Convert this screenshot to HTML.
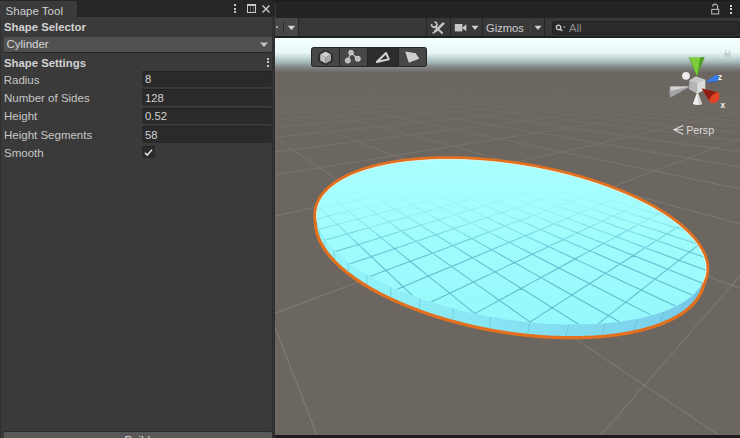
<!DOCTYPE html>
<html><head><meta charset="utf-8">
<style>
*{margin:0;padding:0;box-sizing:border-box}
html,body{width:740px;height:438px;overflow:hidden;background:#1b1b1b;font-family:"Liberation Sans",sans-serif;color:#c8c8c8}
.a{position:absolute}
#lhead{left:0;top:0;width:276px;height:17px;background:#262626;border-top-right-radius:4px}
#tab{left:0;top:1px;width:77px;height:17px;background:#3a3a3a;border-top-right-radius:2px}
#tabtxt{left:5.6px;top:4.8px;font-size:11.5px;color:#d0d0d0;white-space:pre}
#lpanel{left:0;top:17px;width:272px;height:421px;background:#3a3a3a}
#lborder{left:272px;top:17px;width:3px;height:421px;background:#303030}
.t{position:absolute;font-size:11.5px;color:#c6c6c6;white-space:pre;line-height:13px}
.b{font-weight:bold;color:#d2d2d2;font-size:11.35px}
.fld{position:absolute;left:142px;width:130px;height:16.6px;background:#2a2a2a;border-top:1px solid #202020;border-radius:2px}
.fv{position:absolute;left:145px;font-size:11.3px;color:#d2d2d2;white-space:pre;line-height:13px}
#rtop{left:276px;top:0;width:464px;height:17.5px;background:#232323;border-top:1px solid #1a1a1a}
#tbar{left:275px;top:17.5px;width:465px;height:20px;background:#383838}
#scene{left:275px;top:37.5px;width:465px;height:397px;overflow:hidden}
</style></head><body>
<div class="a" id="lhead"></div>
<div class="a" id="tab"></div>
<div class="a" id="tabtxt">Shape Tool</div>
<div class="a" id="lpanel"></div>
<div class="a" id="lborder"></div>
<div class="a" style="left:0;top:17px;width:1px;height:421px;background:#303030"></div>
<div class="a" id="rtop"></div>
<div class="a" id="tbar"></div>

<div class="t b" style="left:4px;top:21px">Shape Selector</div>
<div class="a" style="left:4px;top:37px;width:268px;height:15.5px;background:#515151;border-bottom:1.5px solid #262626;border-radius:2px"></div>
<div class="t" style="left:6.5px;top:38px;color:#d8d8d8">Cylinder</div>
<div class="t b" style="left:4px;top:57px">Shape Settings</div>

<div class="t" style="left:3.7px;top:73.7px">Radius</div>
<div class="t" style="left:4px;top:91.5px">Number of Sides</div>
<div class="t" style="left:4px;top:110px">Height</div>
<div class="t" style="left:4px;top:128.5px">Height Segments</div>
<div class="t" style="left:4px;top:147px">Smooth</div>

<div class="fld" style="top:70.6px"></div>
<div class="fld" style="top:89.1px"></div>
<div class="fld" style="top:107.6px"></div>
<div class="fld" style="top:126.1px"></div>
<div class="fv" style="top:73px">8</div>
<div class="fv" style="top:91.5px">128</div>
<div class="fv" style="top:110px">0.52</div>
<div class="fv" style="top:128.5px">58</div>
<div class="a" style="left:142px;top:145.6px;width:13px;height:12.8px;background:#2a2a2a;border-top:1px solid #212121;border-radius:2px"></div>

<div class="a" style="left:4px;top:431px;width:268px;height:8px;background:#585858;border-top:1px solid #2a2a2a;border-radius:2px 2px 0 0;overflow:hidden"><div style="position:absolute;left:120.5px;top:2.3px;font-size:11.5px;line-height:13px;color:#e0e0e0">Build</div></div>
<div class="a" style="left:275px;top:433.8px;width:465px;height:1px;background:#78736c"></div>


<!-- header icons -->
<div class="a" style="left:234px;top:4px;width:2px;height:2px;background:#c8c8c8"></div>
<div class="a" style="left:234px;top:7.5px;width:2px;height:2px;background:#c8c8c8"></div>
<div class="a" style="left:234px;top:11px;width:2px;height:2px;background:#c8c8c8"></div>
<div class="a" style="left:247px;top:4px;width:9px;height:8.5px;border:1px solid #c8c8c8;border-top-width:2px"></div><div class="a" style="left:250px;top:7px;width:1px;height:4.5px;background:#5a5a5a"></div><div class="a" style="left:252.5px;top:7px;width:1px;height:4.5px;background:#5a5a5a"></div>
<svg class="a" style="left:261px;top:3.5px" width="10" height="10" viewBox="0 0 10 10"><path d="M1.5,1.5L8.5,8.5M8.5,1.5L1.5,8.5" stroke="#d0d0d0" stroke-width="1.3"/></svg>
<!-- dropdown arrow -->
<svg class="a" style="left:259px;top:41px" width="10" height="7" viewBox="0 0 10 7"><path d="M1,1.5L9,1.5L5,6Z" fill="#c4c4c4"/></svg>
<!-- settings kebab -->
<div class="a" style="left:267px;top:57.5px;width:2px;height:2px;background:#c4c4c4"></div>
<div class="a" style="left:267px;top:61px;width:2px;height:2px;background:#c4c4c4"></div>
<div class="a" style="left:267px;top:64.5px;width:2px;height:2px;background:#c4c4c4"></div>
<!-- checkmark -->
<svg class="a" style="left:142px;top:145.7px" width="13" height="13" viewBox="0 0 13 13"><path d="M3,6.8L5.3,9L10,3.8" stroke="#e0e0e0" stroke-width="1.6" fill="none"/></svg>

<!-- scene toolbar -->
<div class="a" style="left:275px;top:17.5px;width:23px;height:19px;background:#474747"></div>
<div class="a" style="left:276px;top:26px;width:2px;height:2px;background:#a0a0a0"></div>
<div class="a" style="left:283px;top:22px;width:1px;height:11px;background:#2c2c2c"></div>
<svg class="a" style="left:287px;top:24.5px" width="9" height="6" viewBox="0 0 9 6"><path d="M0.8,0.8L8.2,0.8L4.5,5.2Z" fill="#d0d0d0"/></svg>
<div class="a" style="left:298px;top:17.5px;width:1px;height:19px;background:#262626"></div>
<div class="a" style="left:426px;top:17.5px;width:1px;height:19px;background:#262626"></div>
<div class="a" style="left:450px;top:17.5px;width:1px;height:19px;background:#262626"></div>
<div class="a" style="left:482px;top:17.5px;width:1px;height:19px;background:#262626"></div>
<div class="a" style="left:530px;top:20px;width:1px;height:14px;background:#444"></div>
<div class="a" style="left:544px;top:17.5px;width:1px;height:19px;background:#262626"></div>
<div class="a" style="left:275px;top:36px;width:465px;height:1.5px;background:#1e1e1e"></div>
<svg class="a" style="left:430px;top:20.5px" width="15" height="15" viewBox="0 0 15 15">
<path d="M4.6,5L12.6,12.4" stroke="#c4c4c4" stroke-width="2"/>
<path d="M1.6,3.2A2.7,2.7 0 1 0 4.6,0.9" stroke="#c4c4c4" stroke-width="1.7" fill="none"/>
<path d="M13.2,2.6L5.6,10" stroke="#c4c4c4" stroke-width="2.6" stroke-linecap="round"/>
<path d="M5.8,9.8L2.6,12.4" stroke="#c4c4c4" stroke-width="1.5"/>
</svg>
<svg class="a" style="left:454px;top:23px" width="14" height="10" viewBox="0 0 14 10">
<rect x="0.8" y="1" width="7.6" height="7.4" fill="#c8c8c8"/>
<path d="M8.6,4.2L12.4,1.2L12.4,8.2L8.6,5.4Z" fill="#c8c8c8"/>
</svg>
<svg class="a" style="left:471px;top:25px" width="8" height="6" viewBox="0 0 8 6"><path d="M0.5,0.8L7.5,0.8L4,5Z" fill="#d0d0d0"/></svg>
<div class="a" style="left:486px;top:21.5px;font-size:11.2px;color:#cfcfcf;line-height:13px;white-space:pre">Gizmos</div>
<svg class="a" style="left:533.5px;top:25px" width="8" height="6" viewBox="0 0 8 6"><path d="M0.5,0.8L7.5,0.8L4,5Z" fill="#d0d0d0"/></svg>
<div class="a" style="left:552px;top:20.5px;width:187.5px;height:14px;background:#2a2a2a;border:1px solid #212121;border-radius:3px"></div>
<svg class="a" style="left:555px;top:24px" width="12" height="8" viewBox="0 0 12 8">
<circle cx="3.6" cy="3.4" r="2.2" stroke="#d0d0d0" stroke-width="1.3" fill="none"/>
<path d="M5.2,5L7.2,7" stroke="#d0d0d0" stroke-width="1.4"/>
<path d="M8,2.5L10.4,2.5L9.2,4Z" fill="#c0c0c0"/>
</svg>
<div class="a" style="left:569px;top:21.5px;font-size:11.2px;color:#8e8e8e;line-height:13px;white-space:pre">All</div>
<!-- top right lock / kebab -->
<svg class="a" style="left:709px;top:3px" width="12" height="12" viewBox="0 0 12 12">
<path d="M3.6,3.6A2.5,2.5 0 0 1 8.6,3.6L8.6,6.5" stroke="#b4b4b4" stroke-width="1.2" fill="none"/>
<rect x="2.7" y="6.4" width="7" height="4.5" stroke="#b4b4b4" stroke-width="1.1" fill="none"/>
</svg>
<div class="a" style="left:730px;top:4.7px;width:2px;height:2px;background:#d0d0d0"></div>
<div class="a" style="left:730px;top:8.2px;width:2px;height:2px;background:#d0d0d0"></div>
<div class="a" style="left:730px;top:11.7px;width:2px;height:2px;background:#d0d0d0"></div>
<!-- left panel border top -->
<div class="a" style="left:274.5px;top:3px;width:1px;height:15px;background:#3a3a3a"></div>
<div class="a" id="scene">
<svg width="465" height="397" viewBox="275 37.5 465 397">
<defs>
<linearGradient id="sky" x1="0" y1="37.5" x2="0" y2="72" gradientUnits="userSpaceOnUse">
<stop offset="0" stop-color="#f6ffff"/>
<stop offset="0.42" stop-color="#e8f8f6"/>
<stop offset="0.559" stop-color="#c8dcdc"/>
<stop offset="0.699" stop-color="#a8b8b8"/>
<stop offset="0.797" stop-color="#8c9696"/>
<stop offset="0.899" stop-color="#7a7a78"/>
<stop offset="1" stop-color="#6e6866"/>
</linearGradient>
<linearGradient id="gfade" x1="0" y1="72" x2="0" y2="435" gradientUnits="userSpaceOnUse">
<stop offset="0" stop-color="#fff" stop-opacity="0"/>
<stop offset="0.05" stop-color="#fff" stop-opacity="0.03"/>
<stop offset="0.105" stop-color="#fff" stop-opacity="0.18"/>
<stop offset="0.215" stop-color="#fff" stop-opacity="0.55"/>
<stop offset="0.49" stop-color="#fff" stop-opacity="0.9"/>
<stop offset="1" stop-color="#fff" stop-opacity="1"/>
</linearGradient>
<mask id="gm"><rect x="275" y="71" width="465" height="364" fill="url(#gfade)"/></mask>
<linearGradient id="bandgrad" x1="320" y1="0" x2="712" y2="0" gradientUnits="userSpaceOnUse">
<stop offset="0" stop-color="#94f6fa"/>
<stop offset="0.25" stop-color="#8eecf6"/>
<stop offset="0.55" stop-color="#84e0f2"/>
<stop offset="0.85" stop-color="#7cd2ec"/>
<stop offset="1" stop-color="#74c4e8"/>
</linearGradient>
<linearGradient id="facegrad" x1="0" y1="156" x2="0" y2="330" gradientUnits="userSpaceOnUse">
<stop offset="0" stop-color="#aafefe"/>
<stop offset="0.5" stop-color="#a0fcfc"/>
<stop offset="1" stop-color="#94f8fc"/>
</linearGradient>
<linearGradient id="ffade" x1="0" y1="160" x2="0" y2="330" gradientUnits="userSpaceOnUse">
<stop offset="0" stop-color="#fff" stop-opacity="0"/>
<stop offset="0.15" stop-color="#fff" stop-opacity="0.12"/>
<stop offset="0.35" stop-color="#fff" stop-opacity="0.55"/>
<stop offset="0.6" stop-color="#fff" stop-opacity="0.9"/>
<stop offset="1" stop-color="#fff" stop-opacity="1"/>
</linearGradient>
<mask id="fm"><rect x="275" y="150" width="465" height="200" fill="url(#ffade)"/></mask>
<filter id="soft" x="-5%" y="-5%" width="110%" height="110%"><feGaussianBlur stdDeviation="0.4"/></filter>
<clipPath id="outbot"><path clip-rule="evenodd" d="M275,37L740,37L740,435L275,435ZM640.0,208.3L636.9,206.7L633.9,205.1L630.7,203.6L627.6,202.1L624.5,200.6L621.3,199.2L618.2,197.8L615.0,196.5L611.8,195.2L608.6,193.9L605.4,192.7L602.2,191.5L599.0,190.3L595.8,189.1L592.7,188.0L589.5,186.9L586.3,185.9L583.1,184.9L579.9,183.9L576.7,182.9L573.6,182.0L570.4,181.1L567.3,180.2L564.1,179.3L561.0,178.5L557.9,177.7L554.7,176.9L551.6,176.2L548.5,175.5L545.5,174.8L542.4,174.1L539.3,173.5L536.3,172.8L533.2,172.2L530.2,171.6L527.2,171.1L524.2,170.6L521.2,170.0L518.2,169.6L515.2,169.1L512.3,168.6L509.4,168.2L506.4,167.8L503.5,167.4L500.6,167.0L497.7,166.7L494.8,166.4L492.0,166.1L489.1,165.8L486.3,165.5L483.5,165.3L480.6,165.0L477.9,164.8L475.1,164.6L472.3,164.5L469.5,164.3L466.8,164.2L464.0,164.0L461.3,163.9L458.6,163.9L455.9,163.8L453.2,163.8L450.6,163.7L447.9,163.7L445.3,163.7L442.6,163.8L440.0,163.8L437.4,163.9L434.8,163.9L432.2,164.0L429.7,164.2L427.1,164.3L424.6,164.5L422.1,164.6L419.6,164.8L417.1,165.0L414.6,165.3L412.1,165.5L409.7,165.8L407.2,166.1L404.8,166.4L402.4,166.7L400.0,167.0L397.6,167.4L395.3,167.8L392.9,168.2L390.6,168.6L388.3,169.1L386.0,169.6L383.7,170.0L381.5,170.6L379.3,171.1L377.0,171.6L374.9,172.2L372.7,172.8L370.5,173.5L368.4,174.1L366.3,174.8L364.2,175.5L362.2,176.2L360.1,176.9L358.1,177.7L356.2,178.5L354.2,179.3L352.3,180.2L350.4,181.1L348.6,182.0L346.7,182.9L345.0,183.9L343.2,184.9L341.5,185.9L339.8,186.9L338.2,188.0L336.6,189.1L335.1,190.3L333.6,191.5L332.1,192.7L330.7,193.9L329.4,195.2L328.1,196.5L326.8,197.8L325.7,199.2L324.6,200.6L323.5,202.1L322.5,203.6L321.6,205.1L320.8,206.7L320.0,208.3L319.3,209.9L318.7,211.6L318.2,213.3L317.8,215.1L317.4,216.9L317.2,218.7L317.1,220.6L317.0,222.5L317.1,224.4L317.3,226.4L317.6,228.5L318.1,230.5L318.6,232.7L319.3,234.8L320.1,237.0L321.1,239.2L322.2,241.5L323.5,243.8L324.9,246.2L326.4,248.5L328.2,250.9L330.1,253.4L332.2,255.8L334.4,258.3L336.9,260.9L339.5,263.4L342.3,266.0L345.3,268.6L348.6,271.2L352.0,273.8L355.6,276.4L359.4,279.1L363.5,281.7L367.7,284.3L372.2,287.0L376.9,289.6L381.7,292.2L386.9,294.7L392.2,297.3L397.7,299.8L403.4,302.3L409.4,304.8L415.5,307.1L421.8,309.5L428.3,311.8L435.0,314.0L441.8,316.1L448.9,318.2L456.0,320.1L463.3,322.0L470.7,323.8L478.3,325.5L485.9,327.0L493.6,328.5L501.4,329.8L509.3,331.0L517.1,332.1L525.0,333.0L532.9,333.8L540.8,334.5L548.6,335.0L556.4,335.3L564.2,335.6L571.8,335.6L579.3,335.6L586.7,335.3L594.0,335.0L601.1,334.5L608.0,333.8L614.7,333.0L621.3,332.1L627.6,331.0L633.7,329.8L639.6,328.5L645.2,327.0L650.6,325.5L655.7,323.8L660.6,322.0L665.2,320.1L669.5,318.2L673.6,316.1L677.4,314.0L680.9,311.8L684.1,309.5L687.0,307.1L689.7,304.8L692.1,302.3L694.3,299.8L696.2,297.3L697.8,294.7L699.2,292.2L700.3,289.6L701.2,287.0L701.9,284.3L702.4,281.7L702.6,279.1L702.6,276.4L702.5,273.8L702.1,271.2L701.6,268.6L700.9,266.0L700.0,263.4L698.9,260.9L697.7,258.3L696.4,255.8L694.9,253.4L693.3,250.9L691.6,248.5L689.7,246.2L687.8,243.8L685.7,241.5L683.6,239.2L681.3,237.0L679.0,234.8L676.6,232.7L674.1,230.5L671.5,228.5L668.9,226.4L666.2,224.4L663.5,222.5L660.7,220.6L657.8,218.7L655.0,216.9L652.0,215.1L649.1,213.3L646.1,211.6L643.1,209.9Z"/></clipPath>
<clipPath id="topclip"><path d="M641.8,201.4L638.7,199.9L635.6,198.4L632.4,196.9L629.2,195.5L626.1,194.1L622.9,192.8L619.7,191.5L616.5,190.2L613.2,188.9L610.0,187.7L606.8,186.5L603.6,185.4L600.3,184.2L597.1,183.1L593.9,182.1L590.7,181.1L587.5,180.0L584.2,179.1L581.0,178.1L577.8,177.2L574.6,176.3L571.5,175.4L568.3,174.6L565.1,173.8L562.0,173.0L558.8,172.2L555.7,171.5L552.5,170.8L549.4,170.1L546.3,169.4L543.2,168.8L540.1,168.2L537.1,167.6L534.0,167.0L531.0,166.5L527.9,165.9L524.9,165.4L521.9,164.9L518.9,164.5L515.9,164.0L512.9,163.6L510.0,163.2L507.0,162.8L504.1,162.4L501.2,162.1L498.3,161.7L495.4,161.4L492.5,161.1L489.6,160.9L486.8,160.6L483.9,160.4L481.1,160.2L478.3,160.0L475.5,159.8L472.7,159.6L469.9,159.5L467.2,159.3L464.4,159.2L461.7,159.1L459.0,159.0L456.3,159.0L453.6,158.9L450.9,158.9L448.2,158.9L445.6,158.9L442.9,158.9L440.3,159.0L437.7,159.0L435.1,159.1L432.5,159.2L429.9,159.3L427.3,159.5L424.8,159.6L422.3,159.8L419.7,160.0L417.2,160.2L414.7,160.4L412.3,160.6L409.8,160.9L407.4,161.1L404.9,161.4L402.5,161.7L400.1,162.1L397.7,162.4L395.3,162.8L393.0,163.2L390.7,163.6L388.3,164.0L386.0,164.5L383.8,164.9L381.5,165.4L379.2,165.9L377.0,166.5L374.8,167.0L372.6,167.6L370.5,168.2L368.3,168.8L366.2,169.4L364.1,170.1L362.1,170.8L360.0,171.5L358.0,172.2L356.0,173.0L354.1,173.8L352.1,174.6L350.2,175.4L348.4,176.3L346.5,177.2L344.8,178.1L343.0,179.1L341.3,180.0L339.6,181.1L337.9,182.1L336.3,183.1L334.8,184.2L333.3,185.4L331.8,186.5L330.4,187.7L329.0,188.9L327.7,190.2L326.5,191.5L325.3,192.8L324.2,194.1L323.1,195.5L322.1,196.9L321.2,198.4L320.4,199.9L319.6,201.4L318.9,203.0L318.3,204.6L317.8,206.3L317.3,207.9L317.0,209.7L316.7,211.4L316.6,213.2L316.6,215.0L316.6,216.9L316.8,218.8L317.1,220.8L317.5,222.8L318.1,224.8L318.8,226.9L319.6,229.0L320.6,231.1L321.7,233.3L323.0,235.5L324.4,237.7L326.0,240.0L327.7,242.3L329.6,244.7L331.7,247.1L334.0,249.5L336.5,251.9L339.1,254.3L341.9,256.8L345.0,259.3L348.2,261.8L351.7,264.3L355.3,266.9L359.2,269.4L363.3,271.9L367.6,274.5L372.1,277.0L376.8,279.5L381.8,282.0L386.9,284.5L392.3,287.0L397.9,289.4L403.7,291.8L409.7,294.2L415.9,296.5L422.3,298.8L428.9,301.0L435.6,303.1L442.6,305.2L449.7,307.1L457.0,309.0L464.4,310.9L471.9,312.6L479.5,314.2L487.3,315.7L495.1,317.1L503.0,318.4L510.9,319.6L518.9,320.6L526.9,321.5L534.9,322.3L542.9,322.9L550.9,323.4L558.8,323.8L566.6,324.0L574.3,324.1L581.9,324.0L589.4,323.8L596.8,323.4L604.0,322.9L611.0,322.3L617.8,321.5L624.4,320.6L630.8,319.6L637.0,318.4L643.0,317.1L648.6,315.7L654.1,314.2L659.2,312.6L664.1,310.9L668.8,309.0L673.1,307.1L677.2,305.2L681.0,303.1L684.5,301.0L687.7,298.8L690.7,296.5L693.3,294.2L695.7,291.8L697.9,289.4L699.8,287.0L701.4,284.5L702.7,282.0L703.8,279.5L704.7,277.0L705.4,274.5L705.8,271.9L706.0,269.4L706.0,266.9L705.8,264.3L705.4,261.8L704.8,259.3L704.0,256.8L703.1,254.3L702.0,251.9L700.7,249.5L699.3,247.1L697.8,244.7L696.1,242.3L694.4,240.0L692.5,237.7L690.4,235.5L688.3,233.3L686.1,231.1L683.8,229.0L681.4,226.9L679.0,224.8L676.4,222.8L673.8,220.8L671.1,218.8L668.4,216.9L665.6,215.0L662.8,213.2L659.9,211.4L657.0,209.7L654.0,207.9L651.0,206.3L648.0,204.6L644.9,203.0Z"/></clipPath>
</defs>
<rect x="275" y="37.5" width="465" height="35" fill="url(#sky)"/>
<rect x="275" y="72" width="465" height="363" fill="#6c6660"/>
<g mask="url(#gm)"><path d="M-650.2,116.2L469.5,84.1M-750.6,121.7L478.9,84.5M-878.9,128.7L488.9,85.0M-1048.3,137.9L499.6,85.4M-1282.6,150.6L511.1,85.9M-1627.7,169.4L523.4,86.5M-2186.9,199.8L536.7,87.1M-3248.6,257.6L551.0,87.7M-6043.0,409.7L566.4,88.4M-33620.8,1910.7L583.2,89.1M-36028.3,2246.2L601.6,89.9M-32134.4,2246.2L621.6,90.8M-28240.5,2246.2L643.6,91.7M-24346.5,2246.2L668.0,92.8M-20452.6,2246.2L695.0,94.0M-16558.7,2246.2L725.1,95.3M-12664.7,2246.2L758.9,96.8M-8770.8,2246.2L797.2,98.5M-4876.9,2246.2L840.9,100.4M-983.0,2246.2L891.1,102.6M2911.0,2246.2L949.6,105.2M6804.9,2246.2L1018.5,108.2M10698.8,2246.2L1100.9,111.8M14592.8,2246.2L1201.1,116.2M18486.7,2246.2L1325.6,121.6M22380.6,2246.2L1484.6,128.6M26274.6,2246.2L1694.7,137.8M30168.5,2246.2L1985.1,150.6M34062.4,2246.2L2412.7,169.3M37956.3,2246.2L3105.2,199.7M41850.3,2246.2L4418.6,257.2M45744.2,2246.2L7867.1,408.4M49638.1,2246.2L41265.6,1872.5M-494.5,109.9L-37498.8,2246.2M-417.4,107.8L-35091.3,2246.2M-348.3,105.9L-32683.9,2246.2M-286.0,104.2L-30276.5,2246.2M-229.6,102.7L-27869.0,2246.2M-178.2,101.3L-25461.6,2246.2M-131.2,100.0L-23054.2,2246.2M-88.0,98.8L-20646.7,2246.2M-48.3,97.7L-18239.3,2246.2M-11.6,96.7L-15831.9,2246.2M22.4,95.8L-13424.4,2246.2M54.1,94.9L-11017.0,2246.2M83.5,94.1L-8609.5,2246.2M111.1,93.4L-6202.1,2246.2M136.8,92.7L-3794.7,2246.2M161.0,92.0L-1387.2,2246.2M183.7,91.4L1020.2,2246.2M205.1,90.8L3427.6,2246.2M225.3,90.2L5835.1,2246.2M244.4,89.7L8242.5,2246.2M262.5,89.2L10649.9,2246.2M279.6,88.7L13057.4,2246.2M295.8,88.3L15464.8,2246.2M311.3,87.9L17872.3,2246.2M325.9,87.5L20279.7,2246.2M339.9,87.1L22687.1,2246.2M353.3,86.7L25094.6,2246.2M366.0,86.4L27502.0,2246.2M378.2,86.0L29909.4,2246.2M389.9,85.7L32316.9,2246.2M401.1,85.4L34724.3,2246.2M411.8,85.1L37131.7,2246.2M422.0,84.8L39539.2,2246.2M431.9,84.6L41946.6,2246.2M441.4,84.3L44354.0,2246.2M450.5,84.1L46761.5,2246.2M459.3,83.8L49168.9,2246.2" stroke="#8a8580" stroke-width="0.8" fill="none"/></g>
<path d="M641.8,201.4L638.7,199.9L635.6,198.4L632.4,196.9L629.2,195.5L626.1,194.1L622.9,192.8L619.7,191.5L616.5,190.2L613.2,188.9L610.0,187.7L606.8,186.5L603.6,185.4L600.3,184.2L597.1,183.1L593.9,182.1L590.7,181.1L587.5,180.0L584.2,179.1L581.0,178.1L577.8,177.2L574.6,176.3L571.5,175.4L568.3,174.6L565.1,173.8L562.0,173.0L558.8,172.2L555.7,171.5L552.5,170.8L549.4,170.1L546.3,169.4L543.2,168.8L540.1,168.2L537.1,167.6L534.0,167.0L531.0,166.5L527.9,165.9L524.9,165.4L521.9,164.9L518.9,164.5L515.9,164.0L512.9,163.6L510.0,163.2L507.0,162.8L504.1,162.4L501.2,162.1L498.3,161.7L495.4,161.4L492.5,161.1L489.6,160.9L486.8,160.6L483.9,160.4L481.1,160.2L478.3,160.0L475.5,159.8L472.7,159.6L469.9,159.5L467.2,159.3L464.4,159.2L461.7,159.1L459.0,159.0L456.3,159.0L453.6,158.9L450.9,158.9L448.2,158.9L445.6,158.9L442.9,158.9L440.3,159.0L437.7,159.0L435.1,159.1L432.5,159.2L429.9,159.3L427.3,159.5L424.8,159.6L422.3,159.8L419.7,160.0L417.2,160.2L414.7,160.4L412.3,160.6L409.8,160.9L407.4,161.1L404.9,161.4L402.5,161.7L400.1,162.1L397.7,162.4L395.3,162.8L393.0,163.2L390.7,163.6L388.3,164.0L386.0,164.5L383.8,164.9L381.5,165.4L379.2,165.9L377.0,166.5L374.8,167.0L372.6,167.6L370.5,168.2L368.3,168.8L366.2,169.4L364.1,170.1L362.1,170.8L360.0,171.5L358.0,172.2L356.0,173.0L354.1,173.8L352.1,174.6L350.2,175.4L348.4,176.3L346.5,177.2L344.8,178.1L343.0,179.1L341.3,180.0L339.6,181.1L337.9,182.1L336.3,183.1L334.8,184.2L333.3,185.4L331.8,186.5L330.4,187.7L329.0,188.9L327.7,190.2L326.5,191.5L325.3,192.8L324.2,194.1L323.1,195.5L322.1,196.9L321.2,198.4L320.4,199.9L319.6,201.4L318.9,203.0L318.3,204.6L317.8,206.3L317.3,207.9L317.0,209.7L316.7,211.4L316.6,213.2L316.6,215.0L316.6,216.9L316.8,218.8L317.1,220.8L317.5,222.8L318.1,224.8L318.8,226.9L319.6,229.0L320.6,231.1L321.7,233.3L323.0,235.5L324.4,237.7L326.0,240.0L327.7,242.3L329.6,244.7L331.7,247.1L334.0,249.5L336.5,251.9L339.1,254.3L341.9,256.8L345.0,259.3L348.2,261.8L351.7,264.3L355.3,266.9L359.2,269.4L363.3,271.9L367.6,274.5L372.1,277.0L376.8,279.5L381.8,282.0L386.9,284.5L392.3,287.0L397.9,289.4L403.7,291.8L409.7,294.2L415.9,296.5L422.3,298.8L428.9,301.0L435.6,303.1L442.6,305.2L449.7,307.1L457.0,309.0L464.4,310.9L471.9,312.6L479.5,314.2L487.3,315.7L495.1,317.1L503.0,318.4L510.9,319.6L518.9,320.6L526.9,321.5L534.9,322.3L542.9,322.9L550.9,323.4L558.8,323.8L566.6,324.0L574.3,324.1L581.9,324.0L589.4,323.8L596.8,323.4L604.0,322.9L611.0,322.3L617.8,321.5L624.4,320.6L630.8,319.6L637.0,318.4L643.0,317.1L648.6,315.7L654.1,314.2L659.2,312.6L664.1,310.9L668.8,309.0L673.1,307.1L677.2,305.2L681.0,303.1L684.5,301.0L687.7,298.8L690.7,296.5L693.3,294.2L695.7,291.8L697.9,289.4L699.8,287.0L701.4,284.5L702.7,282.0L703.8,279.5L704.7,277.0L705.4,274.5L705.8,271.9L706.0,269.4L706.0,266.9L705.8,264.3L705.4,261.8L704.8,259.3L704.0,256.8L703.1,254.3L702.0,251.9L700.7,249.5L699.3,247.1L697.8,244.7L696.1,242.3L694.4,240.0L692.5,237.7L690.4,235.5L688.3,233.3L686.1,231.1L683.8,229.0L681.4,226.9L679.0,224.8L676.4,222.8L673.8,220.8L671.1,218.8L668.4,216.9L665.6,215.0L662.8,213.2L659.9,211.4L657.0,209.7L654.0,207.9L651.0,206.3L648.0,204.6L644.9,203.0Z" fill="none" stroke="#e2701e" stroke-width="6.4"/>
<path d="M640.0,208.3L636.9,206.7L633.9,205.1L630.7,203.6L627.6,202.1L624.5,200.6L621.3,199.2L618.2,197.8L615.0,196.5L611.8,195.2L608.6,193.9L605.4,192.7L602.2,191.5L599.0,190.3L595.8,189.1L592.7,188.0L589.5,186.9L586.3,185.9L583.1,184.9L579.9,183.9L576.7,182.9L573.6,182.0L570.4,181.1L567.3,180.2L564.1,179.3L561.0,178.5L557.9,177.7L554.7,176.9L551.6,176.2L548.5,175.5L545.5,174.8L542.4,174.1L539.3,173.5L536.3,172.8L533.2,172.2L530.2,171.6L527.2,171.1L524.2,170.6L521.2,170.0L518.2,169.6L515.2,169.1L512.3,168.6L509.4,168.2L506.4,167.8L503.5,167.4L500.6,167.0L497.7,166.7L494.8,166.4L492.0,166.1L489.1,165.8L486.3,165.5L483.5,165.3L480.6,165.0L477.9,164.8L475.1,164.6L472.3,164.5L469.5,164.3L466.8,164.2L464.0,164.0L461.3,163.9L458.6,163.9L455.9,163.8L453.2,163.8L450.6,163.7L447.9,163.7L445.3,163.7L442.6,163.8L440.0,163.8L437.4,163.9L434.8,163.9L432.2,164.0L429.7,164.2L427.1,164.3L424.6,164.5L422.1,164.6L419.6,164.8L417.1,165.0L414.6,165.3L412.1,165.5L409.7,165.8L407.2,166.1L404.8,166.4L402.4,166.7L400.0,167.0L397.6,167.4L395.3,167.8L392.9,168.2L390.6,168.6L388.3,169.1L386.0,169.6L383.7,170.0L381.5,170.6L379.3,171.1L377.0,171.6L374.9,172.2L372.7,172.8L370.5,173.5L368.4,174.1L366.3,174.8L364.2,175.5L362.2,176.2L360.1,176.9L358.1,177.7L356.2,178.5L354.2,179.3L352.3,180.2L350.4,181.1L348.6,182.0L346.7,182.9L345.0,183.9L343.2,184.9L341.5,185.9L339.8,186.9L338.2,188.0L336.6,189.1L335.1,190.3L333.6,191.5L332.1,192.7L330.7,193.9L329.4,195.2L328.1,196.5L326.8,197.8L325.7,199.2L324.6,200.6L323.5,202.1L322.5,203.6L321.6,205.1L320.8,206.7L320.0,208.3L319.3,209.9L318.7,211.6L318.2,213.3L317.8,215.1L317.4,216.9L317.2,218.7L317.1,220.6L317.0,222.5L317.1,224.4L317.3,226.4L317.6,228.5L318.1,230.5L318.6,232.7L319.3,234.8L320.1,237.0L321.1,239.2L322.2,241.5L323.5,243.8L324.9,246.2L326.4,248.5L328.2,250.9L330.1,253.4L332.2,255.8L334.4,258.3L336.9,260.9L339.5,263.4L342.3,266.0L345.3,268.6L348.6,271.2L352.0,273.8L355.6,276.4L359.4,279.1L363.5,281.7L367.7,284.3L372.2,287.0L376.9,289.6L381.7,292.2L386.9,294.7L392.2,297.3L397.7,299.8L403.4,302.3L409.4,304.8L415.5,307.1L421.8,309.5L428.3,311.8L435.0,314.0L441.8,316.1L448.9,318.2L456.0,320.1L463.3,322.0L470.7,323.8L478.3,325.5L485.9,327.0L493.6,328.5L501.4,329.8L509.3,331.0L517.1,332.1L525.0,333.0L532.9,333.8L540.8,334.5L548.6,335.0L556.4,335.3L564.2,335.6L571.8,335.6L579.3,335.6L586.7,335.3L594.0,335.0L601.1,334.5L608.0,333.8L614.7,333.0L621.3,332.1L627.6,331.0L633.7,329.8L639.6,328.5L645.2,327.0L650.6,325.5L655.7,323.8L660.6,322.0L665.2,320.1L669.5,318.2L673.6,316.1L677.4,314.0L680.9,311.8L684.1,309.5L687.0,307.1L689.7,304.8L692.1,302.3L694.3,299.8L696.2,297.3L697.8,294.7L699.2,292.2L700.3,289.6L701.2,287.0L701.9,284.3L702.4,281.7L702.6,279.1L702.6,276.4L702.5,273.8L702.1,271.2L701.6,268.6L700.9,266.0L700.0,263.4L698.9,260.9L697.7,258.3L696.4,255.8L694.9,253.4L693.3,250.9L691.6,248.5L689.7,246.2L687.8,243.8L685.7,241.5L683.6,239.2L681.3,237.0L679.0,234.8L676.6,232.7L674.1,230.5L671.5,228.5L668.9,226.4L666.2,224.4L663.5,222.5L660.7,220.6L657.8,218.7L655.0,216.9L652.0,215.1L649.1,213.3L646.1,211.6L643.1,209.9Z" fill="none" stroke="#e2701e" stroke-width="6.4"/>
<path d="M640.0,208.3L636.9,206.7L633.9,205.1L630.7,203.6L627.6,202.1L624.5,200.6L621.3,199.2L618.2,197.8L615.0,196.5L611.8,195.2L608.6,193.9L605.4,192.7L602.2,191.5L599.0,190.3L595.8,189.1L592.7,188.0L589.5,186.9L586.3,185.9L583.1,184.9L579.9,183.9L576.7,182.9L573.6,182.0L570.4,181.1L567.3,180.2L564.1,179.3L561.0,178.5L557.9,177.7L554.7,176.9L551.6,176.2L548.5,175.5L545.5,174.8L542.4,174.1L539.3,173.5L536.3,172.8L533.2,172.2L530.2,171.6L527.2,171.1L524.2,170.6L521.2,170.0L518.2,169.6L515.2,169.1L512.3,168.6L509.4,168.2L506.4,167.8L503.5,167.4L500.6,167.0L497.7,166.7L494.8,166.4L492.0,166.1L489.1,165.8L486.3,165.5L483.5,165.3L480.6,165.0L477.9,164.8L475.1,164.6L472.3,164.5L469.5,164.3L466.8,164.2L464.0,164.0L461.3,163.9L458.6,163.9L455.9,163.8L453.2,163.8L450.6,163.7L447.9,163.7L445.3,163.7L442.6,163.8L440.0,163.8L437.4,163.9L434.8,163.9L432.2,164.0L429.7,164.2L427.1,164.3L424.6,164.5L422.1,164.6L419.6,164.8L417.1,165.0L414.6,165.3L412.1,165.5L409.7,165.8L407.2,166.1L404.8,166.4L402.4,166.7L400.0,167.0L397.6,167.4L395.3,167.8L392.9,168.2L390.6,168.6L388.3,169.1L386.0,169.6L383.7,170.0L381.5,170.6L379.3,171.1L377.0,171.6L374.9,172.2L372.7,172.8L370.5,173.5L368.4,174.1L366.3,174.8L364.2,175.5L362.2,176.2L360.1,176.9L358.1,177.7L356.2,178.5L354.2,179.3L352.3,180.2L350.4,181.1L348.6,182.0L346.7,182.9L345.0,183.9L343.2,184.9L341.5,185.9L339.8,186.9L338.2,188.0L336.6,189.1L335.1,190.3L333.6,191.5L332.1,192.7L330.7,193.9L329.4,195.2L328.1,196.5L326.8,197.8L325.7,199.2L324.6,200.6L323.5,202.1L322.5,203.6L321.6,205.1L320.8,206.7L320.0,208.3L319.3,209.9L318.7,211.6L318.2,213.3L317.8,215.1L317.4,216.9L317.2,218.7L317.1,220.6L317.0,222.5L317.1,224.4L317.3,226.4L317.6,228.5L318.1,230.5L318.6,232.7L319.3,234.8L320.1,237.0L321.1,239.2L322.2,241.5L323.5,243.8L324.9,246.2L326.4,248.5L328.2,250.9L330.1,253.4L332.2,255.8L334.4,258.3L336.9,260.9L339.5,263.4L342.3,266.0L345.3,268.6L348.6,271.2L352.0,273.8L355.6,276.4L359.4,279.1L363.5,281.7L367.7,284.3L372.2,287.0L376.9,289.6L381.7,292.2L386.9,294.7L392.2,297.3L397.7,299.8L403.4,302.3L409.4,304.8L415.5,307.1L421.8,309.5L428.3,311.8L435.0,314.0L441.8,316.1L448.9,318.2L456.0,320.1L463.3,322.0L470.7,323.8L478.3,325.5L485.9,327.0L493.6,328.5L501.4,329.8L509.3,331.0L517.1,332.1L525.0,333.0L532.9,333.8L540.8,334.5L548.6,335.0L556.4,335.3L564.2,335.6L571.8,335.6L579.3,335.6L586.7,335.3L594.0,335.0L601.1,334.5L608.0,333.8L614.7,333.0L621.3,332.1L627.6,331.0L633.7,329.8L639.6,328.5L645.2,327.0L650.6,325.5L655.7,323.8L660.6,322.0L665.2,320.1L669.5,318.2L673.6,316.1L677.4,314.0L680.9,311.8L684.1,309.5L687.0,307.1L689.7,304.8L692.1,302.3L694.3,299.8L696.2,297.3L697.8,294.7L699.2,292.2L700.3,289.6L701.2,287.0L701.9,284.3L702.4,281.7L702.6,279.1L702.6,276.4L702.5,273.8L702.1,271.2L701.6,268.6L700.9,266.0L700.0,263.4L698.9,260.9L697.7,258.3L696.4,255.8L694.9,253.4L693.3,250.9L691.6,248.5L689.7,246.2L687.8,243.8L685.7,241.5L683.6,239.2L681.3,237.0L679.0,234.8L676.6,232.7L674.1,230.5L671.5,228.5L668.9,226.4L666.2,224.4L663.5,222.5L660.7,220.6L657.8,218.7L655.0,216.9L652.0,215.1L649.1,213.3L646.1,211.6L643.1,209.9Z" fill="url(#bandgrad)"/>
<path d="M316.7,217.5L317.2,225.0M318.9,227.3L319.5,235.3M324.5,238.0L325.0,246.4M334.0,249.5L334.5,258.4M348.0,261.6L348.3,271.0M366.8,274.0L367.0,283.9M390.8,286.3L390.7,296.6M419.9,297.9L419.4,308.6M453.6,308.2L452.7,319.2M490.7,316.3L489.3,327.7M529.7,321.8L527.7,333.3M568.5,324.0L566.0,335.6M605.0,322.8L602.1,334.4M637.3,318.3L634.0,329.7M663.9,310.9L660.4,322.1M684.0,301.3L680.4,312.1M697.4,290.0L693.8,300.4" stroke="#5aa8c0" stroke-width="0.8" fill="none" opacity="0.5"/>
<path d="M641.8,201.4L638.7,199.9L635.6,198.4L632.4,196.9L629.2,195.5L626.1,194.1L622.9,192.8L619.7,191.5L616.5,190.2L613.2,188.9L610.0,187.7L606.8,186.5L603.6,185.4L600.3,184.2L597.1,183.1L593.9,182.1L590.7,181.1L587.5,180.0L584.2,179.1L581.0,178.1L577.8,177.2L574.6,176.3L571.5,175.4L568.3,174.6L565.1,173.8L562.0,173.0L558.8,172.2L555.7,171.5L552.5,170.8L549.4,170.1L546.3,169.4L543.2,168.8L540.1,168.2L537.1,167.6L534.0,167.0L531.0,166.5L527.9,165.9L524.9,165.4L521.9,164.9L518.9,164.5L515.9,164.0L512.9,163.6L510.0,163.2L507.0,162.8L504.1,162.4L501.2,162.1L498.3,161.7L495.4,161.4L492.5,161.1L489.6,160.9L486.8,160.6L483.9,160.4L481.1,160.2L478.3,160.0L475.5,159.8L472.7,159.6L469.9,159.5L467.2,159.3L464.4,159.2L461.7,159.1L459.0,159.0L456.3,159.0L453.6,158.9L450.9,158.9L448.2,158.9L445.6,158.9L442.9,158.9L440.3,159.0L437.7,159.0L435.1,159.1L432.5,159.2L429.9,159.3L427.3,159.5L424.8,159.6L422.3,159.8L419.7,160.0L417.2,160.2L414.7,160.4L412.3,160.6L409.8,160.9L407.4,161.1L404.9,161.4L402.5,161.7L400.1,162.1L397.7,162.4L395.3,162.8L393.0,163.2L390.7,163.6L388.3,164.0L386.0,164.5L383.8,164.9L381.5,165.4L379.2,165.9L377.0,166.5L374.8,167.0L372.6,167.6L370.5,168.2L368.3,168.8L366.2,169.4L364.1,170.1L362.1,170.8L360.0,171.5L358.0,172.2L356.0,173.0L354.1,173.8L352.1,174.6L350.2,175.4L348.4,176.3L346.5,177.2L344.8,178.1L343.0,179.1L341.3,180.0L339.6,181.1L337.9,182.1L336.3,183.1L334.8,184.2L333.3,185.4L331.8,186.5L330.4,187.7L329.0,188.9L327.7,190.2L326.5,191.5L325.3,192.8L324.2,194.1L323.1,195.5L322.1,196.9L321.2,198.4L320.4,199.9L319.6,201.4L318.9,203.0L318.3,204.6L317.8,206.3L317.3,207.9L317.0,209.7L316.7,211.4L316.6,213.2L316.6,215.0L316.6,216.9L316.8,218.8L317.1,220.8L317.5,222.8L318.1,224.8L318.8,226.9L319.6,229.0L320.6,231.1L321.7,233.3L323.0,235.5L324.4,237.7L326.0,240.0L327.7,242.3L329.6,244.7L331.7,247.1L334.0,249.5L336.5,251.9L339.1,254.3L341.9,256.8L345.0,259.3L348.2,261.8L351.7,264.3L355.3,266.9L359.2,269.4L363.3,271.9L367.6,274.5L372.1,277.0L376.8,279.5L381.8,282.0L386.9,284.5L392.3,287.0L397.9,289.4L403.7,291.8L409.7,294.2L415.9,296.5L422.3,298.8L428.9,301.0L435.6,303.1L442.6,305.2L449.7,307.1L457.0,309.0L464.4,310.9L471.9,312.6L479.5,314.2L487.3,315.7L495.1,317.1L503.0,318.4L510.9,319.6L518.9,320.6L526.9,321.5L534.9,322.3L542.9,322.9L550.9,323.4L558.8,323.8L566.6,324.0L574.3,324.1L581.9,324.0L589.4,323.8L596.8,323.4L604.0,322.9L611.0,322.3L617.8,321.5L624.4,320.6L630.8,319.6L637.0,318.4L643.0,317.1L648.6,315.7L654.1,314.2L659.2,312.6L664.1,310.9L668.8,309.0L673.1,307.1L677.2,305.2L681.0,303.1L684.5,301.0L687.7,298.8L690.7,296.5L693.3,294.2L695.7,291.8L697.9,289.4L699.8,287.0L701.4,284.5L702.7,282.0L703.8,279.5L704.7,277.0L705.4,274.5L705.8,271.9L706.0,269.4L706.0,266.9L705.8,264.3L705.4,261.8L704.8,259.3L704.0,256.8L703.1,254.3L702.0,251.9L700.7,249.5L699.3,247.1L697.8,244.7L696.1,242.3L694.4,240.0L692.5,237.7L690.4,235.5L688.3,233.3L686.1,231.1L683.8,229.0L681.4,226.9L679.0,224.8L676.4,222.8L673.8,220.8L671.1,218.8L668.4,216.9L665.6,215.0L662.8,213.2L659.9,211.4L657.0,209.7L654.0,207.9L651.0,206.3L648.0,204.6L644.9,203.0Z" fill="url(#facegrad)"/>
<g clip-path="url(#topclip)"><g filter="url(#soft)" stroke="#52aec4" stroke-width="1.05" fill="none" opacity="0.8"><path d="M353.6,174.0L357.5,173.3M357.5,173.3L361.4,172.6M361.4,172.6L365.3,171.9M365.3,171.9L369.1,171.2M369.1,171.2L372.8,170.5M372.8,170.5L376.5,169.8M376.5,169.8L380.2,169.2M380.2,169.2L383.8,168.5M383.8,168.5L387.3,167.9M387.3,167.9L390.8,167.2M390.8,167.2L394.3,166.6M394.3,166.6L397.7,166.0M397.7,166.0L401.1,165.4M401.1,165.4L404.4,164.8M404.4,164.8L407.7,164.2M407.7,164.2L410.9,163.6M410.9,163.6L414.1,163.0M414.1,163.0L417.3,162.4M417.3,162.4L420.4,161.9M420.4,161.9L423.5,161.3M423.5,161.3L426.5,160.7M426.5,160.7L429.5,160.2M429.5,160.2L432.5,159.6M432.5,159.6L435.4,159.1M336.9,182.7L343.4,181.5M343.4,181.5L349.7,180.3M349.7,180.3L355.9,179.1M355.9,179.1L361.9,178.0M361.9,178.0L367.8,176.8M367.8,176.8L373.6,175.7M373.6,175.7L379.3,174.6M379.3,174.6L384.9,173.6M384.9,173.6L390.3,172.5M390.3,172.5L395.6,171.5M395.6,171.5L400.8,170.5M400.8,170.5L406.0,169.5M406.0,169.5L411.0,168.5M411.0,168.5L415.9,167.6M415.9,167.6L420.7,166.7M420.7,166.7L425.5,165.8M425.5,165.8L430.1,164.9M430.1,164.9L434.7,164.0M434.7,164.0L439.2,163.1M439.2,163.1L443.5,162.3M443.5,162.3L447.9,161.5M447.9,161.5L452.1,160.7M452.1,160.7L456.3,159.9M456.3,159.9L460.3,159.1M326.8,191.2L335.3,189.5M335.3,189.5L343.5,187.8M343.5,187.8L351.6,186.1M351.6,186.1L359.4,184.6M359.4,184.6L367.0,183.0M367.0,183.0L374.4,181.5M374.4,181.5L381.6,180.1M381.6,180.1L388.6,178.6M388.6,178.6L395.4,177.3M395.4,177.3L402.1,175.9M402.1,175.9L408.5,174.6M408.5,174.6L414.9,173.3M414.9,173.3L421.0,172.1M421.0,172.1L427.1,170.8M427.1,170.8L432.9,169.7M432.9,169.7L438.7,168.5M438.7,168.5L444.3,167.4M444.3,167.4L449.8,166.2M449.8,166.2L455.1,165.2M455.1,165.2L460.4,164.1M460.4,164.1L465.5,163.1M465.5,163.1L470.5,162.1M470.5,162.1L475.4,161.1M475.4,161.1L480.1,160.1M359.7,191.4L368.7,189.4M368.7,189.4L377.4,187.6M377.4,187.6L385.9,185.7M385.9,185.7L394.1,184.0M394.1,184.0L402.0,182.3M402.0,182.3L409.7,180.6M409.7,180.6L417.2,179.0M417.2,179.0L424.5,177.4M424.5,177.4L431.6,175.9M431.6,175.9L438.4,174.4M438.4,174.4L445.1,173.0M445.1,173.0L451.6,171.6M451.6,171.6L457.9,170.3M457.9,170.3L464.1,168.9M464.1,168.9L470.0,167.6M470.0,167.6L475.9,166.4M475.9,166.4L481.5,165.2M481.5,165.2L487.1,164.0M487.1,164.0L492.5,162.8M492.5,162.8L497.7,161.7M401.2,189.6L410.0,187.6M410.0,187.6L418.6,185.6M418.6,185.6L426.9,183.7M426.9,183.7L434.9,181.9M434.9,181.9L442.7,180.1M442.7,180.1L450.2,178.4M450.2,178.4L457.5,176.7M457.5,176.7L464.6,175.1M464.6,175.1L471.4,173.5M471.4,173.5L478.1,172.0M478.1,172.0L484.5,170.5M484.5,170.5L490.8,169.1M490.8,169.1L496.9,167.7M496.9,167.7L502.8,166.4M502.8,166.4L508.6,165.0M508.6,165.0L514.2,163.8M428.7,191.0L437.7,188.8M437.7,188.8L446.3,186.7M446.3,186.7L454.6,184.7M454.6,184.7L462.6,182.7M462.6,182.7L470.4,180.8M470.4,180.8L477.9,179.0M477.9,179.0L485.2,177.2M485.2,177.2L492.2,175.5M492.2,175.5L499.0,173.9M499.0,173.9L505.6,172.2M505.6,172.2L511.9,170.7M511.9,170.7L518.1,169.2M518.1,169.2L524.1,167.7M524.1,167.7L529.9,166.3M467.4,189.7L475.8,187.5M475.8,187.5L483.9,185.4M483.9,185.4L491.7,183.3M491.7,183.3L499.3,181.4M499.3,181.4L506.6,179.5M506.6,179.5L513.6,177.6M513.6,177.6L520.4,175.8M520.4,175.8L526.9,174.1M526.9,174.1L533.3,172.4M533.3,172.4L539.4,170.8M539.4,170.8L545.4,169.3M498.3,190.5L506.3,188.2M506.3,188.2L514.0,186.0M514.0,186.0L521.4,183.9M521.4,183.9L528.6,181.9M528.6,181.9L535.5,179.9M535.5,179.9L542.1,178.0M542.1,178.0L548.6,176.2M548.6,176.2L554.8,174.4M554.8,174.4L560.8,172.7M529.4,191.2L536.9,188.9M536.9,188.9L544.1,186.7M544.1,186.7L551.0,184.6M551.0,184.6L557.6,182.5M557.6,182.5L564.1,180.5M564.1,180.5L570.3,178.6M570.3,178.6L576.3,176.8M567.1,189.9L573.7,187.7M573.7,187.7L580.0,185.5M580.0,185.5L586.1,183.5M586.1,183.5L592.0,181.5M596.6,191.4L602.5,189.2M602.5,189.2L608.2,187.0M335.3,183.9L339.0,186.5M339.0,186.5L343.0,189.3M345.6,177.7L349.8,180.3M349.8,180.3L354.2,183.1M354.2,183.1L358.8,186.0M358.8,186.0L363.7,189.0M356.2,172.9L360.8,175.5M360.8,175.5L365.6,178.2M365.6,178.2L370.7,181.1M370.7,181.1L376.0,184.1M376.0,184.1L381.7,187.3M381.7,187.3L387.7,190.6M367.1,169.2L372.0,171.7M372.0,171.7L377.2,174.3M377.2,174.3L382.6,177.1M382.6,177.1L388.3,180.0M388.3,180.0L394.3,183.1M394.3,183.1L400.7,186.4M400.7,186.4L407.5,189.9M378.3,166.2L383.4,168.6M383.4,168.6L388.8,171.1M388.8,171.1L394.5,173.8M394.5,173.8L400.5,176.6M400.5,176.6L406.9,179.6M406.9,179.6L413.6,182.8M413.6,182.8L420.8,186.1M420.8,186.1L428.4,189.7M389.7,163.8L395.1,166.1M395.1,166.1L400.7,168.5M400.7,168.5L406.6,171.1M406.6,171.1L412.9,173.8M412.9,173.8L419.5,176.6M419.5,176.6L426.4,179.6M426.4,179.6L433.8,182.8M433.8,182.8L441.6,186.2M441.6,186.2L450.0,189.8M401.6,161.9L407.1,164.1M407.1,164.1L412.9,166.4M412.9,166.4L418.9,168.8M418.9,168.8L425.3,171.4M425.3,171.4L432.1,174.1M432.1,174.1L439.2,177.0M439.2,177.0L446.7,180.0M446.7,180.0L454.7,183.2M454.7,183.2L463.1,186.6M463.1,186.6L472.1,190.2M414.0,160.4L419.6,162.5M419.6,162.5L425.5,164.7M425.5,164.7L431.6,167.0M431.6,167.0L438.1,169.5M438.1,169.5L444.9,172.0M444.9,172.0L452.0,174.7M452.0,174.7L459.6,177.5M459.6,177.5L467.6,180.5M467.6,180.5L476.0,183.7M476.0,183.7L484.9,187.0M484.9,187.0L494.4,190.6M427.2,159.5L432.8,161.4M432.8,161.4L438.7,163.5M438.7,163.5L444.8,165.7M444.8,165.7L451.3,167.9M451.3,167.9L458.0,170.3M458.0,170.3L465.1,172.8M465.1,172.8L472.6,175.4M472.6,175.4L480.4,178.1M480.4,178.1L488.7,181.1M488.7,181.1L497.4,184.1M497.4,184.1L506.7,187.4M506.7,187.4L516.4,190.8M441.5,159.0L447.0,160.8M447.0,160.8L452.8,162.7M452.8,162.7L458.8,164.7M458.8,164.7L465.1,166.8M465.1,166.8L471.7,168.9M471.7,168.9L478.6,171.2M478.6,171.2L485.8,173.6M485.8,173.6L493.4,176.1M493.4,176.1L501.3,178.7M501.3,178.7L509.7,181.5M509.7,181.5L518.4,184.4M518.4,184.4L527.7,187.5M527.7,187.5L537.5,190.7M457.3,159.0L462.7,160.7M462.7,160.7L468.2,162.4M468.2,162.4L474.0,164.2M474.0,164.2L480.0,166.1M480.0,166.1L486.2,168.0M486.2,168.0L492.8,170.1M492.8,170.1L499.5,172.2M499.5,172.2L506.6,174.4M506.6,174.4L514.0,176.7M514.0,176.7L521.8,179.1M521.8,179.1L529.9,181.6M529.9,181.6L538.4,184.3M538.4,184.3L547.3,187.1M547.3,187.1L556.6,190.0M475.7,159.8L480.7,161.3M480.7,161.3L485.8,162.8M485.8,162.8L491.1,164.3M491.1,164.3L496.6,166.0M496.6,166.0L502.3,167.6M502.3,167.6L508.1,169.4M508.1,169.4L514.2,171.2M514.2,171.2L520.6,173.0M520.6,173.0L527.2,175.0M527.2,175.0L534.0,177.0M534.0,177.0L541.1,179.1M541.1,179.1L548.5,181.3M548.5,181.3L556.2,183.6M556.2,183.6L564.2,185.9M564.2,185.9L572.5,188.4M572.5,188.4L581.3,191.0M498.7,161.8L503.0,163.0M503.0,163.0L507.3,164.2M507.3,164.2L511.8,165.5M511.8,165.5L516.3,166.7M516.3,166.7L521.0,168.1M521.0,168.1L525.9,169.4M525.9,169.4L530.9,170.8M530.9,170.8L536.0,172.3M536.0,172.3L541.3,173.7M541.3,173.7L546.7,175.3M546.7,175.3L552.3,176.8M552.3,176.8L558.0,178.4M558.0,178.4L564.0,180.1M564.0,180.1L570.1,181.8M570.1,181.8L576.4,183.6M576.4,183.6L583.0,185.4M583.0,185.4L589.7,187.3M589.7,187.3L596.7,189.3M596.7,189.3L603.9,191.3M535.6,167.3L538.0,168.0M538.0,168.0L540.5,168.6M540.5,168.6L543.0,169.3M543.0,169.3L545.5,170.0M545.5,170.0L548.1,170.6M548.1,170.6L550.7,171.3M550.7,171.3L553.3,172.0M553.3,172.0L556.0,172.8M556.0,172.8L558.7,173.5M558.7,173.5L561.5,174.2M561.5,174.2L564.3,175.0M564.3,175.0L567.1,175.7M567.1,175.7L570.0,176.5M570.0,176.5L572.9,177.3M572.9,177.3L575.9,178.1M575.9,178.1L578.9,178.9M578.9,178.9L582.0,179.7M582.0,179.7L585.1,180.5M585.1,180.5L588.2,181.4M588.2,181.4L591.4,182.2M591.4,182.2L594.7,183.1M594.7,183.1L598.0,184.0M598.0,184.0L601.3,184.9M601.3,184.9L604.7,185.8" opacity="0.0"/><path d="M320.4,199.8L330.7,197.6M330.7,197.6L340.7,195.4M340.7,195.4L350.3,193.4M350.3,193.4L359.7,191.4M362.3,198.5L372.5,196.2M372.5,196.2L382.4,193.9M382.4,193.9L392.0,191.7M392.0,191.7L401.2,189.6M389.3,200.7L399.8,198.1M399.8,198.1L409.8,195.7M409.8,195.7L419.4,193.3M419.4,193.3L428.7,191.0M430.3,199.5L440.2,196.9M440.2,196.9L449.6,194.4M449.6,194.4L458.7,192.0M458.7,192.0L467.4,189.7M462.9,200.5L472.3,197.8M472.3,197.8L481.3,195.3M481.3,195.3L489.9,192.8M489.9,192.8L498.3,190.5M505.2,198.7L513.6,196.1M513.6,196.1L521.6,193.6M521.6,193.6L529.4,191.2M538.1,199.7L545.8,197.1M545.8,197.1L553.2,194.6M553.2,194.6L560.3,192.2M560.3,192.2L567.1,189.9M577.4,198.6L584.0,196.1M584.0,196.1L590.4,193.7M590.4,193.7L596.6,191.4M608.0,200.8L613.9,198.3M613.9,198.3L619.5,195.9M619.5,195.9L625.0,193.7M325.7,192.4L328.8,195.0M328.8,195.0L332.2,197.7M332.2,197.7L335.6,200.5M343.0,189.3L347.1,192.2M347.1,192.2L351.4,195.3M351.4,195.3L356.0,198.5M363.7,189.0L368.9,192.3M368.9,192.3L374.3,195.7M374.3,195.7L380.1,199.3M387.7,190.6L394.0,194.2M394.0,194.2L400.7,198.0M407.5,189.9L414.7,193.6M414.7,193.6L422.4,197.5M422.4,197.5L430.6,201.7M428.4,189.7L436.4,193.4M436.4,193.4L445.0,197.5M450.0,189.8L458.8,193.7M458.8,193.7L468.3,197.8M472.1,190.2L481.6,194.0M481.6,194.0L491.8,198.1M494.4,190.6L504.5,194.4M504.5,194.4L515.3,198.4M516.4,190.8L526.8,194.4M526.8,194.4L537.9,198.3M537.5,190.7L547.8,194.1M547.8,194.1L558.8,197.7M556.6,190.0L566.5,193.0M566.5,193.0L576.9,196.3M576.9,196.3L587.8,199.7M581.3,191.0L590.4,193.7M590.4,193.7L599.9,196.5M599.9,196.5L609.9,199.4M603.9,191.3L611.4,193.4M611.4,193.4L619.1,195.6M619.1,195.6L627.1,197.8M627.1,197.8L635.4,200.1" opacity="0.05"/><path d="M317.1,208.8L329.1,206.1M329.1,206.1L340.6,203.5M340.6,203.5L351.7,200.9M351.7,200.9L362.3,198.5M355.4,209.0L367.2,206.1M367.2,206.1L378.5,203.3M378.5,203.3L389.3,200.7M398.2,207.9L409.4,205.0M409.4,205.0L420.1,202.2M420.1,202.2L430.3,199.5M432.2,209.2L442.8,206.2M442.8,206.2L453.1,203.3M453.1,203.3L462.9,200.5M477.7,207.2L487.2,204.2M487.2,204.2L496.4,201.4M496.4,201.4L505.2,198.7M512.9,208.2L521.7,205.3M521.7,205.3L530.0,202.4M530.0,202.4L538.1,199.7M547.9,209.6L555.7,206.6M555.7,206.6L563.2,203.8M563.2,203.8L570.4,201.1M570.4,201.1L577.4,198.6M588.9,208.7L595.5,205.9M595.5,205.9L601.9,203.3M601.9,203.3L608.0,200.8M626.6,209.2L632.0,206.6M632.0,206.6L637.3,204.1M637.3,204.1L642.4,201.7M317.9,205.6L320.3,207.9M335.6,200.5L339.3,203.4M339.3,203.4L343.0,206.5M343.0,206.5L347.0,209.7M356.0,198.5L360.7,201.9M360.7,201.9L365.8,205.4M365.8,205.4L371.1,209.2M380.1,199.3L386.2,203.1M386.2,203.1L392.7,207.2M400.7,198.0L407.8,202.0M407.8,202.0L415.5,206.3M430.6,201.7L439.3,206.2M445.0,197.5L454.2,201.8M454.2,201.8L464.0,206.4M468.3,197.8L478.4,202.1M478.4,202.1L489.2,206.8M491.8,198.1L502.7,202.5M502.7,202.5L514.4,207.2M515.3,198.4L526.7,202.7M526.7,202.7L539.0,207.3M537.9,198.3L549.6,202.4M549.6,202.4L562.2,206.9M558.8,197.7L570.4,201.6M570.4,201.6L582.8,205.6M582.8,205.6L595.9,210.0M587.8,199.7L599.3,203.3M599.3,203.3L611.5,207.1M609.9,199.4L620.4,202.5M620.4,202.5L631.4,205.8M631.4,205.8L642.9,209.2M635.4,200.1L644.0,202.6" opacity="0.12"/><path d="M330.2,215.1L343.1,212.0M343.1,212.0L355.4,209.0M361.6,217.5L374.4,214.2M374.4,214.2L386.6,211.0M386.6,211.0L398.2,207.9M409.3,215.7L421.0,212.4M421.0,212.4L432.2,209.2M446.3,216.9L457.2,213.5M457.2,213.5L467.7,210.3M467.7,210.3L477.7,207.2M484.2,217.9L494.2,214.5M494.2,214.5L503.8,211.3M503.8,211.3L512.9,208.2M531.1,215.8L539.7,212.6M539.7,212.6L547.9,209.6M567.3,217.7L574.8,214.6M574.8,214.6L582.0,211.6M582.0,211.6L588.9,208.7M608.8,217.6L615.0,214.7M615.0,214.7L620.9,211.9M620.9,211.9L626.6,209.2M651.3,216.9L656.0,214.3M656.0,214.3L660.6,211.9M320.3,207.9L322.8,210.3M322.8,210.3L325.4,212.7M325.4,212.7L328.1,215.2M328.1,215.2L330.9,217.9M347.0,209.7L351.2,213.0M351.2,213.0L355.6,216.6M371.1,209.2L376.8,213.2M376.8,213.2L382.8,217.4M392.7,207.2L399.6,211.5M399.6,211.5L406.9,216.1M415.5,206.3L423.6,210.9M423.6,210.9L432.3,215.8M439.3,206.2L448.7,210.9M448.7,210.9L458.7,216.1M464.0,206.4L474.6,211.3M474.6,211.3L485.9,216.7M489.2,206.8L500.8,211.8M500.8,211.8L513.3,217.3M514.4,207.2L526.9,212.2M526.9,212.2L540.4,217.6M539.0,207.3L552.2,212.2M552.2,212.2L566.3,217.5M562.2,206.9L575.6,211.6M575.6,211.6L590.0,216.6M595.9,210.0L609.9,214.6M611.5,207.1L624.5,211.1M624.5,211.1L638.2,215.4M642.9,209.2L655.1,212.8M655.1,212.8L667.9,216.5" opacity="0.22"/><path d="M316.8,218.4L330.2,215.1M334.2,224.7L348.2,221.0M348.2,221.0L361.6,217.5M370.6,226.7L384.1,222.8M384.1,222.8L397.0,219.2M397.0,219.2L409.3,215.7M422.7,224.1L434.8,220.4M434.8,220.4L446.3,216.9M462.7,225.2L473.7,221.4M473.7,221.4L484.2,217.9M503.0,226.3L512.8,222.7M512.8,222.7L522.2,219.2M522.2,219.2L531.1,215.8M551.3,224.4L559.5,221.0M559.5,221.0L567.3,217.7M595.7,223.8L602.4,220.6M602.4,220.6L608.8,217.6M635.9,225.3L641.2,222.4M641.2,222.4L646.4,219.6M646.4,219.6L651.3,216.9M330.9,217.9L333.7,220.6M333.7,220.6L336.7,223.4M355.6,216.6L360.2,220.3M360.2,220.3L365.0,224.2M382.8,217.4L389.1,221.9M389.1,221.9L395.9,226.7M406.9,216.1L414.7,221.0M414.7,221.0L423.1,226.3M432.3,215.8L441.6,221.1M441.6,221.1L451.7,226.8M458.7,216.1L469.6,221.6M469.6,221.6L481.3,227.6M485.9,216.7L498.2,222.4M513.3,217.3L526.9,223.1M540.4,217.6L555.0,223.5M566.3,217.5L581.6,223.2M590.0,216.6L605.4,222.0M609.9,214.6L624.9,219.6M624.9,219.6L641.0,224.9M638.2,215.4L652.8,220.0M652.8,220.0L668.3,224.8" opacity="0.35"/><path d="M319.5,228.6L334.2,224.7M356.4,230.7L370.6,226.7M396.7,232.1L410.0,228.0M410.0,228.0L422.7,224.1M438.9,233.2L451.1,229.1M451.1,229.1L462.7,225.2M481.8,234.2L492.6,230.2M492.6,230.2L503.0,226.3M533.8,231.7L542.8,227.9M542.8,227.9L551.3,224.4M573.9,234.1L581.5,230.5M581.5,230.5L588.8,227.1M588.8,227.1L595.7,223.8M624.7,231.4L630.4,228.3M630.4,228.3L635.9,225.3M667.4,233.0L671.5,230.3M671.5,230.3L675.6,227.7M675.6,227.7L679.5,225.2M336.7,223.4L339.8,226.3M339.8,226.3L343.0,229.4M343.0,229.4L346.4,232.5M365.0,224.2L370.1,228.4M370.1,228.4L375.5,232.7M395.9,226.7L403.0,231.7M423.1,226.3L432.1,232.0M451.7,226.8L462.5,232.9M481.3,227.6L493.9,234.1M498.2,222.4L511.4,228.6M511.4,228.6L525.8,235.4M526.9,223.1L541.5,229.5M555.0,223.5L570.8,229.8M581.6,223.2L598.1,229.4M598.1,229.4L616.0,236.1M605.4,222.0L622.1,227.9M622.1,227.9L640.1,234.2M641.0,224.9L658.2,230.6M668.3,224.8L684.9,230.0" opacity="0.5"/><path d="M325.6,239.5L341.4,235.0M341.4,235.0L356.4,230.7M367.8,241.0L382.7,236.5M382.7,236.5L396.7,232.1M412.6,242.1L426.1,237.5M426.1,237.5L438.9,233.2M470.4,238.5L481.8,234.2M514.5,239.7L524.4,235.6M524.4,235.6L533.8,231.7M557.6,241.8L566.0,237.9M566.0,237.9L573.9,234.1M606.1,241.6L612.5,238.1M612.5,238.1L618.7,234.7M618.7,234.7L624.7,231.4M654.0,241.6L658.6,238.7M658.6,238.7L663.1,235.8M663.1,235.8L667.4,233.0M346.4,232.5L349.9,235.8M349.9,235.8L353.5,239.3M375.5,232.7L381.2,237.3M381.2,237.3L387.2,242.2M403.0,231.7L410.7,237.2M410.7,237.2L418.9,243.0M432.1,232.0L441.8,238.0M462.5,232.9L474.3,239.5M493.9,234.1L507.7,241.1M525.8,235.4L541.5,242.7M541.5,229.5L557.5,236.4M557.5,236.4L574.9,243.9M570.8,229.8L588.0,236.7M588.0,236.7L606.7,244.2M616.0,236.1L635.5,243.4M640.1,234.2L659.6,241.0M658.2,230.6L676.8,236.7M676.8,236.7L696.9,243.3" opacity="0.65"/><path d="M352.1,245.9L367.8,241.0M398.3,246.9L412.6,242.1M445.7,247.7L458.4,243.0M458.4,243.0L470.4,238.5M493.1,248.6L504.1,244.1M504.1,244.1L514.5,239.7M539.7,250.2L548.9,245.9M548.9,245.9L557.6,241.8M592.3,249.1L599.3,245.3M599.3,245.3L606.1,241.6M644.2,247.9L649.2,244.7M649.2,244.7L654.0,241.6M695.0,247.1L697.9,244.8M353.5,239.3L357.3,242.8M357.3,242.8L361.2,246.6M387.2,242.2L393.6,247.4M418.9,243.0L427.7,249.2M441.8,238.0L452.3,244.6M452.3,244.6L463.6,251.7M474.3,239.5L487.0,246.6M507.7,241.1L522.7,248.8M541.5,242.7L558.6,250.8M574.9,243.9L593.9,252.1M635.5,243.4L656.8,251.4M659.6,241.0L680.8,248.5" opacity="0.8"/><path d="M335.5,251.0L352.1,245.9M367.1,257.4L383.2,252.0M383.2,252.0L398.3,246.9M418.1,258.0L432.3,252.7M432.3,252.7L445.7,247.7M481.6,253.5L493.1,248.6M530.1,254.8L539.7,250.2M577.2,257.3L584.9,253.1M584.9,253.1L592.3,249.1M633.7,254.7L639.1,251.2M639.1,251.2L644.2,247.9M685.8,254.3L689.0,251.9M689.0,251.9L692.0,249.5M692.0,249.5L695.0,247.1M361.2,246.6L365.3,250.5M365.3,250.5L369.6,254.5M393.6,247.4L400.4,252.9M427.7,249.2L437.2,255.9M463.6,251.7L475.8,259.4M487.0,246.6L500.8,254.5M522.7,248.8L539.1,257.2M558.6,250.8L577.5,259.6M606.7,244.2L627.2,252.5M680.8,248.5L703.9,256.6" opacity="0.9"/><path d="M350.1,263.2L367.1,257.4M370.1,275.9L387.1,269.6M387.1,269.6L403.1,263.6M403.1,263.6L418.1,258.0M396.6,288.9L413.0,282.1M413.0,282.1L428.4,275.6M428.4,275.6L442.9,269.6M442.9,269.6L456.5,263.9M456.5,263.9L469.4,258.5M469.4,258.5L481.6,253.5M431.0,301.6L446.1,294.5M446.1,294.5L460.2,287.8M460.2,287.8L473.6,281.5M473.6,281.5L486.2,275.6M486.2,275.6L498.1,269.9M498.1,269.9L509.3,264.6M509.3,264.6L520.0,259.6M520.0,259.6L530.1,254.8M474.7,313.2L487.6,306.1M487.6,306.1L499.8,299.5M499.8,299.5L511.4,293.2M511.4,293.2L522.3,287.2M522.3,287.2L532.6,281.6M532.6,281.6L542.5,276.3M542.5,276.3L551.8,271.2M551.8,271.2L560.7,266.3M560.7,266.3L569.1,261.7M569.1,261.7L577.2,257.3M529.6,321.8L539.5,315.4M539.5,315.4L548.9,309.3M548.9,309.3L557.8,303.6M557.8,303.6L566.4,298.1M566.4,298.1L574.5,292.8M574.5,292.8L582.3,287.8M582.3,287.8L589.7,283.0M589.7,283.0L596.8,278.5M596.8,278.5L603.6,274.1M603.6,274.1L610.1,269.9M610.1,269.9L616.4,265.8M616.4,265.8L622.4,262.0M622.4,262.0L628.2,258.3M628.2,258.3L633.7,254.7M598.2,323.3L604.1,318.7M604.1,318.7L609.8,314.2M609.8,314.2L615.3,309.8M615.3,309.8L620.6,305.7M620.6,305.7L625.8,301.6M625.8,301.6L630.7,297.7M630.7,297.7L635.5,294.0M635.5,294.0L640.1,290.3M640.1,290.3L644.6,286.8M644.6,286.8L649.0,283.4M649.0,283.4L653.2,280.1M653.2,280.1L657.2,276.9M657.2,276.9L661.2,273.7M661.2,273.7L665.0,270.7M665.0,270.7L668.8,267.8M668.8,267.8L672.4,264.9M672.4,264.9L675.9,262.2M675.9,262.2L679.3,259.5M679.3,259.5L682.6,256.9M682.6,256.9L685.8,254.3M369.6,254.5L374.2,258.8M374.2,258.8L378.9,263.3M378.9,263.3L383.8,268.0M383.8,268.0L389.0,272.9M389.0,272.9L394.5,278.1M394.5,278.1L400.3,283.5M400.3,283.5L406.4,289.3M406.4,289.3L412.8,295.3M400.4,252.9L407.6,258.7M407.6,258.7L415.3,265.0M415.3,265.0L423.6,271.6M423.6,271.6L432.4,278.8M432.4,278.8L441.9,286.4M441.9,286.4L452.1,294.7M452.1,294.7L463.1,303.6M463.1,303.6L475.1,313.3M437.2,255.9L447.4,263.1M447.4,263.1L458.5,270.9M458.5,270.9L470.4,279.4M470.4,279.4L483.5,288.6M483.5,288.6L497.7,298.7M497.7,298.7L513.4,309.7M513.4,309.7L530.6,321.9M475.8,259.4L489.2,267.7M489.2,267.7L503.8,276.9M503.8,276.9L519.8,287.0M519.8,287.0L537.5,298.0M537.5,298.0L557.1,310.3M557.1,310.3L578.9,324.0M500.8,254.5L516.0,263.0M516.0,263.0L532.6,272.4M532.6,272.4L551.0,282.7M551.0,282.7L571.3,294.2M571.3,294.2L594.0,307.0M594.0,307.0L619.4,321.3M539.1,257.2L557.1,266.5M557.1,266.5L577.0,276.7M577.0,276.7L599.2,288.0M599.2,288.0L623.9,300.7M623.9,300.7L651.7,314.9M577.5,259.6L598.3,269.4M598.3,269.4L621.3,280.2M621.3,280.2L647.0,292.3M647.0,292.3L675.9,305.8M593.9,252.1L614.9,261.2M614.9,261.2L638.1,271.2M638.1,271.2L663.8,282.4M663.8,282.4L692.6,294.8M627.2,252.5L649.8,261.5M649.8,261.5L674.7,271.6M674.7,271.6L702.4,282.7M656.8,251.4L680.2,260.2M680.2,260.2L706.0,269.8" opacity="1.0"/></g></g>
<path d="M641.8,201.4L638.7,199.9L635.6,198.4L632.4,196.9L629.2,195.5L626.1,194.1L622.9,192.8L619.7,191.5L616.5,190.2L613.2,188.9L610.0,187.7L606.8,186.5L603.6,185.4L600.3,184.2L597.1,183.1L593.9,182.1L590.7,181.1L587.5,180.0L584.2,179.1L581.0,178.1L577.8,177.2L574.6,176.3L571.5,175.4L568.3,174.6L565.1,173.8L562.0,173.0L558.8,172.2L555.7,171.5L552.5,170.8L549.4,170.1L546.3,169.4L543.2,168.8L540.1,168.2L537.1,167.6L534.0,167.0L531.0,166.5L527.9,165.9L524.9,165.4L521.9,164.9L518.9,164.5L515.9,164.0L512.9,163.6L510.0,163.2L507.0,162.8L504.1,162.4L501.2,162.1L498.3,161.7L495.4,161.4L492.5,161.1L489.6,160.9L486.8,160.6L483.9,160.4L481.1,160.2L478.3,160.0L475.5,159.8L472.7,159.6L469.9,159.5L467.2,159.3L464.4,159.2L461.7,159.1L459.0,159.0L456.3,159.0L453.6,158.9L450.9,158.9L448.2,158.9L445.6,158.9L442.9,158.9L440.3,159.0L437.7,159.0L435.1,159.1L432.5,159.2L429.9,159.3L427.3,159.5L424.8,159.6L422.3,159.8L419.7,160.0L417.2,160.2L414.7,160.4L412.3,160.6L409.8,160.9L407.4,161.1L404.9,161.4L402.5,161.7L400.1,162.1L397.7,162.4L395.3,162.8L393.0,163.2L390.7,163.6L388.3,164.0L386.0,164.5L383.8,164.9L381.5,165.4L379.2,165.9L377.0,166.5L374.8,167.0L372.6,167.6L370.5,168.2L368.3,168.8L366.2,169.4L364.1,170.1L362.1,170.8L360.0,171.5L358.0,172.2L356.0,173.0L354.1,173.8L352.1,174.6L350.2,175.4L348.4,176.3L346.5,177.2L344.8,178.1L343.0,179.1L341.3,180.0L339.6,181.1L337.9,182.1L336.3,183.1L334.8,184.2L333.3,185.4L331.8,186.5L330.4,187.7L329.0,188.9L327.7,190.2L326.5,191.5L325.3,192.8L324.2,194.1L323.1,195.5L322.1,196.9L321.2,198.4L320.4,199.9L319.6,201.4L318.9,203.0L318.3,204.6L317.8,206.3L317.3,207.9L317.0,209.7L316.7,211.4L316.6,213.2L316.6,215.0L316.6,216.9L316.8,218.8L317.1,220.8L317.5,222.8L318.1,224.8L318.8,226.9L319.6,229.0L320.6,231.1L321.7,233.3L323.0,235.5L324.4,237.7L326.0,240.0L327.7,242.3L329.6,244.7L331.7,247.1L334.0,249.5L336.5,251.9L339.1,254.3L341.9,256.8L345.0,259.3L348.2,261.8L351.7,264.3L355.3,266.9L359.2,269.4L363.3,271.9L367.6,274.5L372.1,277.0L376.8,279.5L381.8,282.0L386.9,284.5L392.3,287.0L397.9,289.4L403.7,291.8L409.7,294.2L415.9,296.5L422.3,298.8L428.9,301.0L435.6,303.1L442.6,305.2L449.7,307.1L457.0,309.0L464.4,310.9L471.9,312.6L479.5,314.2L487.3,315.7L495.1,317.1L503.0,318.4L510.9,319.6L518.9,320.6L526.9,321.5L534.9,322.3L542.9,322.9L550.9,323.4L558.8,323.8L566.6,324.0L574.3,324.1L581.9,324.0L589.4,323.8L596.8,323.4L604.0,322.9L611.0,322.3L617.8,321.5L624.4,320.6L630.8,319.6L637.0,318.4L643.0,317.1L648.6,315.7L654.1,314.2L659.2,312.6L664.1,310.9L668.8,309.0L673.1,307.1L677.2,305.2L681.0,303.1L684.5,301.0L687.7,298.8L690.7,296.5L693.3,294.2L695.7,291.8L697.9,289.4L699.8,287.0L701.4,284.5L702.7,282.0L703.8,279.5L704.7,277.0L705.4,274.5L705.8,271.9L706.0,269.4L706.0,266.9L705.8,264.3L705.4,261.8L704.8,259.3L704.0,256.8L703.1,254.3L702.0,251.9L700.7,249.5L699.3,247.1L697.8,244.7L696.1,242.3L694.4,240.0L692.5,237.7L690.4,235.5L688.3,233.3L686.1,231.1L683.8,229.0L681.4,226.9L679.0,224.8L676.4,222.8L673.8,220.8L671.1,218.8L668.4,216.9L665.6,215.0L662.8,213.2L659.9,211.4L657.0,209.7L654.0,207.9L651.0,206.3L648.0,204.6L644.9,203.0Z" fill="none" stroke="#dcfff6" stroke-width="0.9" clip-path="url(#outbot)"/>
</svg>
</div>

<!-- probuilder overlay -->
<div class="a" style="left:311px;top:47px;width:116px;height:20px;background:#262626;border-radius:3px"></div>
<div class="a" style="left:312px;top:48px;width:27px;height:18px;background:#474747;border-radius:2px 0 0 2px"></div>
<div class="a" style="left:340px;top:48px;width:27px;height:18px;background:#474747"></div>
<div class="a" style="left:368px;top:48px;width:29.5px;height:18px;background:#2d2d2d"></div>
<div class="a" style="left:398.5px;top:48px;width:27.5px;height:18px;background:#474747;border-radius:0 2px 2px 0"></div>
<svg class="a" style="left:311px;top:47px" width="116" height="20" viewBox="311 47 116 20">
<path d="M325.6,50.2L332.4,54L332.4,61.2L325.6,65L318.8,61.2L318.8,54Z" fill="#2c2c2c" stroke="#2c2c2c" stroke-width="0.8" stroke-linejoin="round"/>
<path d="M325.6,51.6L331,54.5L325.6,57.4L320.2,54.5Z" fill="#cfcfcf"/>
<path d="M320.2,54.5L325.6,57.4L325.6,63.4L320.2,60.5Z" fill="#c2c2c2"/>
<path d="M331,54.5L325.6,57.4L325.6,63.4L331,60.5Z" fill="#a9a9a9"/>
<path d="M351,52.6L347.8,60.4M351,52.6L357.6,58.8" stroke="#c8c8c8" stroke-width="1.2"/>
<circle cx="351" cy="52.6" r="2.3" fill="#b8b8b8" stroke="#dedede" stroke-width="0.9"/>
<circle cx="347.8" cy="60.6" r="2.5" fill="#b8b8b8" stroke="#dedede" stroke-width="0.9"/>
<circle cx="357.8" cy="58.8" r="2.5" fill="#b8b8b8" stroke="#dedede" stroke-width="0.9"/>
<path d="M376.8,62L386,53L388.8,59.2Z" stroke="#d4d4d4" stroke-width="2" fill="none" stroke-linejoin="round"/>
<path d="M405.2,51.6L415.8,53.2L419.2,58.8L408.8,62.8Z" fill="#cfcfcf"/>
</svg>
<!-- gizmo -->
<svg class="a" style="left:660px;top:50px" width="80" height="65" viewBox="660 50 80 65">
<path d="M670.2,86.4L690.4,86.4L670.6,97.6Q668.4,92 670.2,86.4Z" fill="#a4a4a4"/>
<path d="M670.2,86.4L690.4,86.4L671,90.8Z" fill="#d2d2d2"/>
<circle cx="686" cy="75.8" r="3.9" fill="#ececec"/>
<path d="M689.2,80.6L696,76.6L705.2,79.8L705.2,89.6L697.2,93.4L689.2,89.6Z" fill="#b4b4b4"/>
<path d="M689.2,80.6L696,76.6L705.2,79.8L697.2,83.2Z" fill="#c8c8c8"/>
<path d="M697.2,83.2L705.2,79.8L705.2,89.6L697.2,93.4Z" fill="#dcdcdc"/>
<path d="M689,57.2L704.6,57.2L696.8,76.2Z" fill="#7ccc3c"/>
<path d="M700.4,57.2L704.6,57.2L696.8,76.2Z" fill="#4e9a22"/>
<path d="M689,57.2L696.8,76.2" stroke="#3c7a1a" stroke-width="0.7" stroke-dasharray="1.2,1"/>
<path d="M705.2,82.2L716.2,74.6Q720,76.6 718,81Z" fill="#3c7cea"/>
<path d="M705.2,82.2L718,81Q713,83.4 705.2,82.2Z" fill="#2a58b4"/>
<path d="M697.4,91.6L692.8,104Q697.4,106.2 702,104Z" fill="#f2f2f2"/>
<path d="M697.4,91.6L700,98L702,104Q699.6,105 698.4,104.6Z" fill="#d0d0d0"/>
<path d="M701.9,88.4L718.6,92.6Q721.4,98.6 716.2,102.6Q710.6,104.6 708.8,100.4Z" fill="#e04424"/>
<path d="M701.9,88.4L718,92.2Q712,93 708.8,100.4Z" fill="#8e1c12"/>
<text x="718" y="80.4" font-family="Liberation Sans" font-weight="bold" font-size="8.2" fill="#f4f4f4">z</text>
<text x="720.4" y="108" font-family="Liberation Sans" font-weight="bold" font-size="8.2" fill="#f4f4f4">x</text>
<path d="M725.6,52.6L725.6,50.6A1.9,1.9 0 0 1 729.4,50.6L729.4,52.8" stroke="#c8d2d2" stroke-width="1.1" fill="none"/>
<rect x="724.2" y="52.8" width="6.4" height="4.2" fill="#c4cece"/>
</svg>
<svg class="a" style="left:672px;top:124px" width="13" height="12" viewBox="0 0 13 12">
<path d="M11.2,1.6L1.8,5.8L11.2,10.2M1.8,5.8L11.2,5.8" stroke="#dcdcdc" stroke-width="1.1" fill="none"/>
</svg>
<div class="a" style="left:686.2px;top:124px;font-size:10.7px;color:#dadada;line-height:12px;white-space:pre">Persp</div>
</body></html>
